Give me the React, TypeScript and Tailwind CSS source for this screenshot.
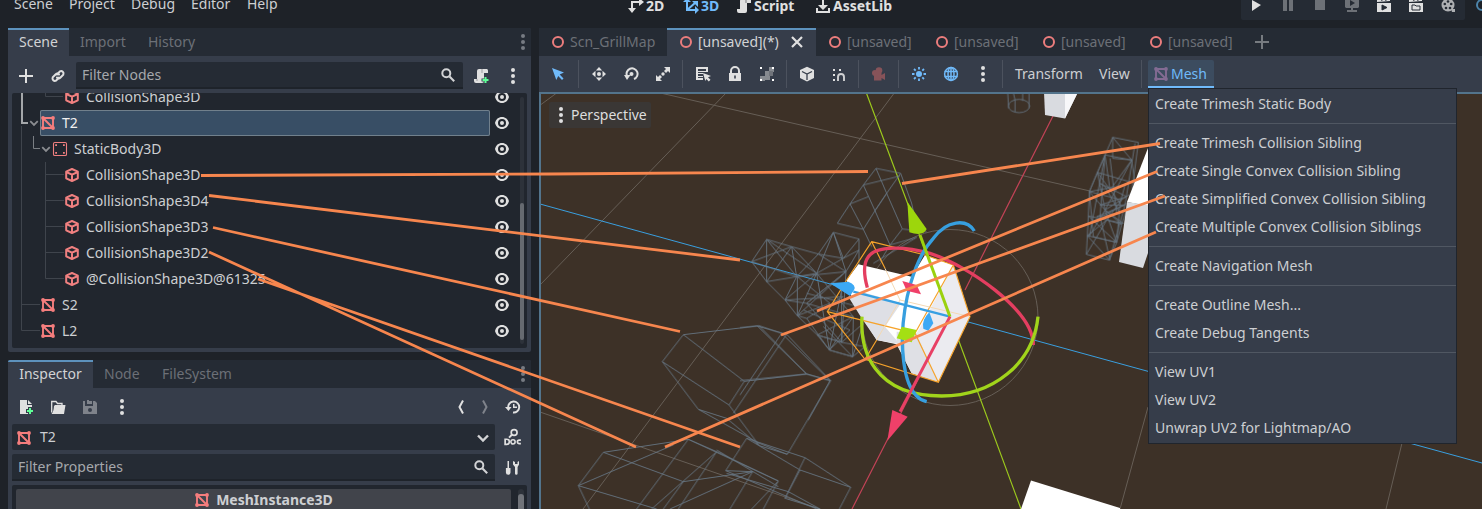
import React from "react";

type P = { c?: string; s?: number; children?: React.ReactNode; cls?: string };
const I = ({ c = "#e0e0e0", s = 16, children, cls = "" }: P) => (
  <svg width={s} height={s} viewBox="0 0 16 16" fill={c} className={"shrink-0 " + cls}>{children}</svg>
);

const MeshIcon = ({ c = "#f57d7d" }: { c?: string }) => (
  <I c={c}>
    <path d="M3 3H13V13H3ZM3 3L13 13" fill="none" stroke={c} strokeWidth="1.9" />
    <circle cx="3" cy="3" r="1.9" /><circle cx="13" cy="3" r="1.9" /><circle cx="3" cy="13" r="1.9" /><circle cx="13" cy="13" r="1.9" />
  </I>
);
const ShapeIcon = () => (
  <I><path d="M8 2L13.8 4.7V11.3L8 14L2.2 11.3V4.7ZM2.2 5L8 7.7L13.8 5M8 7.7V14" fill="none" stroke="#f08080" strokeWidth="2" strokeLinejoin="round" /></I>
);
const BodyIcon = () => (
  <I c="#f08080">
    <rect x="1.5" y="1.5" width="13" height="13" rx="1.3" fill="none" stroke="#f08080" strokeWidth="1.1" />
    <path d="M3.2 3.2h1.8v1.8H3.200zM11 3.200h1.800v1.800h-1.800zM3.200 11h1.800v1.800H3.200zM11 11h1.800v1.800h-1.800z" />
  </I>
);
const Eye = () => (
  <I>
    <path d="M8 2C4.4 2 1.9 4.3 1 8c1 3.8 3.6 6 7 6s6-2.200 7-6C14 4.200 11.500 2 8 2Zm0 2a4 4 0 1 1 0 8a4 4 0 0 1 0-8Zm0 2a2 2 0 1 0 0 4a2 2 0 0 0 0-4Z" />
  </I>
);
const Dots = ({ c = "#e0e0e0" }: { c?: string }) => (
  <I c={c}><circle cx="8" cy="2" r="2" /><circle cx="8" cy="8" r="2" /><circle cx="8" cy="14" r="2" /></I>
);
const Search = () => (
  <I c="none"><circle cx="6.300" cy="6.300" r="4" stroke="#d2d3d5" strokeWidth="2" /><path d="M9.500 9.500L14.200 14.200" stroke="#d2d3d5" strokeWidth="2.100" /></I>
);
const Chevron = ({ c = "#8b8d91", s = 12 }: { c?: string; s?: number }) => (
  <I c="none" s={s}><path d="M3 5.500L8 10.500L13 5.500" stroke={c} strokeWidth="2.400" /></I>
);
const Ring = () => <I c="none"><circle cx="8" cy="8" r="5" stroke="#ec7d7d" strokeWidth="2" /></I>;
const Plus = ({ c = "#e0e0e0" }: { c?: string }) => <I c={c}><path d="M7 1h2v6h6v2H9v6H7V9H1V7h6z" /></I>;
const ScriptAdd = () => (
  <I><path d="M6 1h8a2 2 0 0 1 1 2v2h-4v8a2 2 0 0 1-2 2H3a2 2 0 0 1-2-2v-2h3V3a2 2 0 0 1 2-2Z" /><path d="M9 1v4M4 11v2" stroke="#9b9da0" />
    <path d="M11 8h3v2.500h2.500v3H14V16h-3v-2.500H8.500v-3H11z" fill="#363d4a" /><path d="M11.500 9h2v2h2v2h-2v2h-2v-2h-2v-2h2z" fill="#5fff97" /></I>
);

type Row = { t: string; pad: string; k: "m" | "s" | "b"; arrow?: boolean; sel?: boolean };
const rows: Row[] = [
  { t: "CollisionShape3D", pad: "pl-[52px]", k: "s" },
  { t: "T2", pad: "pl-4", k: "m", arrow: true, sel: true },
  { t: "StaticBody3D", pad: "pl-7", k: "b", arrow: true },
  { t: "CollisionShape3D", pad: "pl-[52px]", k: "s" },
  { t: "CollisionShape3D4", pad: "pl-[52px]", k: "s" },
  { t: "CollisionShape3D3", pad: "pl-[52px]", k: "s" },
  { t: "CollisionShape3D2", pad: "pl-[52px]", k: "s" },
  { t: "@CollisionShape3D@61325", pad: "pl-[52px]", k: "s" },
  { t: "S2", pad: "pl-7", k: "m" },
  { t: "L2", pad: "pl-7", k: "m" },
];

const TreeRow = ({ r }: { r: Row }) => (
  <div className={"flex h-[26px] shrink-0 items-center " + r.pad}>
    {r.arrow && <span className="flex w-3 shrink-0"><Chevron /></span>}
    <div className={"flex h-[26px] flex-1 items-center gap-1.5 " + (r.sel ? "rounded-xs bg-[#384e65] text-[#f0f0f0] shadow-[inset_0_0_0_1px_#71808c]" : "")}>
      {r.k === "m" ? <MeshIcon /> : r.k === "s" ? <ShapeIcon /> : <BodyIcon />}
      <span>{r.t}</span>
    </div>
    <div className="ml-1 mr-[17px] flex w-4"><Eye /></div>
  </div>
);

const TreeLines = () => (
  <svg className="absolute left-0 top-0" width="60" height="255" fill="none">
    <path d="M9.500 33V237.500H28M9.500 211.500H28M33.500 0V3.500H51M33.500 69V185.500H52M33.500 81.500H52M33.500 107.500H52M33.500 133.500H52M33.500 159.500H52" stroke="#3f444c" />
    <path d="M10 0V30H16" stroke="#a4a7aa" strokeWidth="2" />
    <path d="M21.500 43V55.500H28" stroke="#7a7e83" />
  </svg>
);

const SceneDock = () => (
  <section className="flex h-[324px] flex-col rounded-xs bg-[#363d4a]">
    <div className="flex h-7 items-center rounded-t-xs bg-[#252b34] text-[#6c7077]">
      <div className="flex h-7 w-[61px] items-center justify-center border-t-2 border-[#5d92bd] bg-[#363d4a] pb-0.5 text-[#d2d3d5]">Scene</div>
      <span className="ml-[11px] w-[68px]">Import</span>
      <span className="flex-1">History</span>
      <Dots c="#777b82" />
    </div>
    <div className="flex h-[37px] items-center pl-2.5 pr-2.5 pt-0.5">
      <Plus />
      <I cls="ml-4"><g fill="none" stroke="#e0e0e0" strokeWidth="2" strokeLinecap="round"><path d="M7 6.500L10 3.300A2.500 2.500 0 0 1 13.300 6.600L10.500 9.500A2.500 2.500 0 0 1 7 9.500" /><path d="M9 9.500L6 12.700A2.500 2.500 0 0 1 2.700 9.400L5.500 6.500A2.500 2.500 0 0 1 9 6.500" /></g></I>
      <div className="ml-2.5 flex h-[27px] w-[387px] items-center justify-between rounded-t-xs border-b-2 border-[#1e232a] bg-[#252b34] pl-1.5 pr-[7px] text-[#a5a8ac]">
        Filter Nodes<Search />
      </div>
      <span className="ml-[10px] flex"><ScriptAdd /></span>
      <span className="ml-4 flex"><Dots /></span>
    </div>
    <div className="relative mx-1 flex h-[255px] flex-col overflow-hidden rounded-xs bg-[#21262e]">
      <TreeLines />
      <div className="-mt-[9px] flex flex-col">{rows.map((r, i) => <TreeRow key={i} r={r} />)}</div>
      <div className="absolute right-[3px] top-1 h-[247px] w-1 rounded bg-[#2d323a] pt-[106px]"><div className="h-[137px] w-1 rounded-full bg-[#666a70]" /></div>
    </div>
  </section>
);

const Inspector = () => (
  <section className="mt-2 flex h-[149px] flex-col overflow-hidden rounded-t-xs bg-[#363d4a]">
    <div className="flex h-7 shrink-0 items-center bg-[#252b34] text-[#6c7077]">
      <div className="flex h-7 w-[85px] items-center justify-center border-t-2 border-[#5d92bd] bg-[#363d4a] pb-0.5 text-[#d2d3d5]">Inspector</div>
      <span className="ml-[11px] w-[58px]">Node</span>
      <span className="flex-1">FileSystem</span>
      <Dots c="#777b82" />
    </div>
    <div className="flex h-9 shrink-0 items-center gap-4 pl-2.5 pr-2.5 pt-0.5">
      <I><path d="M2 1h7v5h5v9H2zM10 1l4 4h-4z" /><path d="M10 8h4v2h2v4h-2v2h-4v-2H8v-4h2z" fill="#363d4a" /><path d="M11 9h2v2h2v2h-2v2h-2v-2H9v-2h2z" fill="#5fff97" /></I>
      <I><path d="M1.700 13.500V2.500H6L7.500 4.500H12V6" fill="none" stroke="#e0e0e0" strokeWidth="1.300" /><path d="M5 6h10.500L14 15H1.500Q3.600 13 4 7Z" /></I>
      <I c="#7f838b"><path d="M1 2h2v5h8V2h2l2 2v11H1zM5 1h2v4H5zM7 2h3v3H7z" /><circle cx="8" cy="11" r="2" fill="#363d4a" /></I>
      <Dots />
      <span className="flex-1" />
      <I c="none" cls="-mr-2"><path d="M10 1.500L6.500 8L10 14.500" stroke="#e0e0e0" strokeWidth="2" /></I>
      <I c="none" cls="-mr-1"><path d="M6 1.500L9.500 8L6 14.500" stroke="#7f838b" strokeWidth="2" /></I>
      <I><path d="M3.300 9A5.500 5.500 0 1 1 8 13.500" fill="none" stroke="#e0e0e0" strokeWidth="1.900" /><path d="M0 8h6.500L3.500 12zM8 5h1.500v2.500H12V9H8z" /></I>
    </div>
    <div className="flex h-[26px] shrink-0 items-center pl-1">
      <div className="flex h-[26px] w-[483px] items-center gap-2 rounded-xs bg-[#252b34] pl-1 pr-1"><span className="flex pt-0.5"><MeshIcon /></span><span className="flex-1">T2</span><span className="flex pt-0.5"><Chevron c="#d2d3d5" s={16} /></span></div>
      <I s={18} cls="ml-[9px]"><circle cx="9" cy="4" r="2.600" fill="none" stroke="#e0e0e0" strokeWidth="1.500" /><path d="M7 6L4.500 8.500" stroke="#e0e0e0" strokeWidth="1.700" /><path d="M1 10v4.500h1.500a2 2 0 0 0 0-4.500zM15 10.700h-1.500a1.300 1.300 0 0 0 0 3.200H15" fill="none" stroke="#e0e0e0" strokeWidth="1.500" /><circle cx="8" cy="12.300" r="1.900" fill="none" stroke="#e0e0e0" strokeWidth="1.400" /></I>
    </div>
    <div className="mt-1 flex h-[27px] shrink-0 items-center pl-1">
      <div className="flex h-[27px] w-[483px] items-center justify-between rounded-t-xs border-b-2 border-[#1e232a] bg-[#252b34] pl-1.5 pr-1.5 text-[#a5a8ac]">Filter Properties<Search /></div>
      <I cls="ml-[9px]"><path d="M3.500 1h1.500v7h1.500v4.500a2.300 2.300 0 0 1-4.600 0V8h1.600zM9 1v3.500L11 7v6.500a1.300 1.300 0 0 0 2.600 0V7L15 4.500V1l-1.500 1v2h-2.500V2z" /></I>
    </div>
    <div className="mx-1 mt-1 flex h-[60px] shrink-0 gap-[7px] rounded-xs bg-[#21262e] pl-1 pt-1">
      <div className="flex h-[22px] w-[495px] items-center justify-center gap-1.5 rounded-t-xs bg-[#41444b] font-bold"><MeshIcon /><span>MeshInstance3D</span></div>
      <div className="h-10 w-1.5 rounded bg-[#2d323a] pt-[5px]"><div className="h-10 w-1.5 rounded-full bg-[#707379]" /></div>
    </div>
  </section>
);

const Sep = () => <div className="h-7 w-px shrink-0 bg-[#4c525e]" />;
const Tool = ({ children }: { children: React.ReactNode }) => <div className="flex h-7 w-8 shrink-0 items-center justify-center">{children}</div>;

const Toolbar = () => (
  <div className="flex h-9 shrink-0 items-center bg-[#363d4a]">
    <span className="ml-[3px] flex"><Tool><I c="#70bafa"><path d="M2 2L14 6.500L9.700 8.600L13.500 12.500L12 14L8.200 10L6.300 14Z" /></I></Tool></span>
    <span className="ml-1 flex"><Sep /></span>
    <span className="ml-1 flex">
      <Tool><I><circle cx="8" cy="8" r="2" /><path d="M8 1l3.200 3.500H4.800zM8 15l-3.200-3.500h6.400zM1 8l3.500-3.200v6.400zM15 8l-3.500 3.200V4.800z" /></I></Tool>
      <Tool><I><path d="M4 10A5.500 5.500 0 1 1 11 13" fill="none" stroke="#e0e0e0" strokeWidth="2" /><path d="M1 9h6.500L4 14z" /><circle cx="8.500" cy="8" r="2" /></I></Tool>
      <Tool><I><path d="M9 1h6v6l-2-2-2 2-2-2 2-2zM7 15H1V9l2 2 2-2 2 2-2 2z" /><circle cx="8" cy="8" r="1.700" /></I></Tool>
    </span>
    <span className="ml-[3px] flex"><Sep /></span>
    <span className="ml-1 flex">
      <Tool><I><path d="M1 1h12v5h-2V3H3v2h8v1H8v2H3v1h5v2H3v1h5v2H1z" /><path d="M3 3.500h8M3 6.500h6M3 9.500h5" stroke="#363d4a" /><path d="M8 7l8 3-3 1.300 2.500 2.500-1.700 1.700-2.500-2.500-1 2z" /></I></Tool>
      <Tool><I><path d="M4 7V5a4 4 0 0 1 8 0v2" fill="none" stroke="#e0e0e0" strokeWidth="2" /><path d="M2 7h12v8H2z" /><path d="M7.200 9.500h1.600v3H7.200z" fill="#363d4a" /></I></Tool>
      <Tool><I><path d="M6 5h5v5H6zM10 1h5v5h-5zM1 10h5v5H1zM6 10h5v4H6z" fill="#868a90" /><path d="M10 5h4v5h-4z" fill="#70747b" /><path d="M1 1h2v2H1zM13 1h2v2h-2zM1 13h2v2H1zM13 13h2v2h-2z" fill="#fff" /></I></Tool>
    </span>
    <span className="ml-[3px] flex"><Sep /></span>
    <span className="ml-1 flex">
      <Tool><I><path d="M8 .7L15 4v8l-7 3.500L1 12V4z" /><path d="M3 5.500L8 8l5-2.500M8 8v6" fill="none" stroke="#363d4a" strokeWidth="1.300" /></I></Tool>
      <Tool><I><path d="M7 15V11a3 3 0 0 1 6 0v4" fill="none" stroke="#d0d1d3" strokeWidth="1.900" /><path d="M2 3h2v2H2zM8 3h2v2H8zM2 8h2v2H2zM2 13h2v2H2z" /></I></Tool>
    </span>
    <span className="ml-[3px] flex"><Sep /></span>
    <span className="ml-[3px] flex"><Tool><I c="#875359"><circle cx="5" cy="7" r="3" /><circle cx="9" cy="4.500" r="3.300" /><path d="M4 7h7.500v2l3.500-2v7l-3.500-2v2.500H4z" /></I></Tool></span>
    <span className="ml-1 flex"><Sep /></span>
    <span className="ml-1 flex">
      <Tool><I c="#70bafa"><circle cx="8" cy="8" r="3" /><path d="M8 1v2.500M8 12.500V15M1 8h2.500M12.500 8H15M3 3l1.700 1.700M11.300 11.300L13 13M13 3l-1.700 1.700M3 13l1.700-1.700" stroke="#70bafa" strokeWidth="1.800" /></I></Tool>
      <Tool><I c="none"><g stroke="#70bafa" strokeWidth="1.500"><circle cx="8" cy="8" r="6.400" /><ellipse cx="8" cy="8" rx="3" ry="6.400" /><path d="M1.500 5.500H14.500M1.500 10.500H14.500M8 1V15" /></g></I></Tool>
      <Tool><Dots /></Tool>
    </span>
    <span className="ml-[3px] flex"><Sep /></span>
    <span className="ml-3 w-[84px]">Transform</span>
    <span className="w-[42px]">View</span>
    <Sep />
    <div className="ml-1.5 flex h-7 w-[66px] items-center gap-0.5 rounded-t-xs border-b-2 border-[#70bafa] bg-[#3c4c5f] pl-[5px] pt-0.5 text-[#70bafa]"><MeshIcon c="#836b93" /><span>Mesh</span></div>
  </div>
);

const SceneTabs = () => (
  <div className="flex h-7 shrink-0 items-center bg-[#252b34] text-[#6c7077]">
    <div className="flex h-7 w-32 items-center gap-1 pl-[11px]"><Ring /><span>Scn_GrillMap</span></div>
    <div className="flex h-7 w-[149px] items-center gap-1 border-t-2 border-[#5d92bd] bg-[#363d4a] pb-0.5 pl-[11px] text-[#d2d3d5]">
      <Ring /><span className="w-[87px]">[unsaved](*)</span>
      <I><path d="M3 3L13 13M13 3L3 13" stroke="#e0e0e0" strokeWidth="2.200" /></I>
    </div>
    {[0, 1, 2, 3].map((i) => <div key={i} className="flex h-7 w-[107px] items-center gap-1 pl-[11px]"><Ring /><span>[unsaved]</span></div>)}
    <span className="ml-[10px] flex"><Plus c="#777b80" /></span>
  </div>
);

const Drawing = () => (
  <svg className="absolute left-0 top-0" width="941" height="415" viewBox="541 94 941 415" fill="none">
    <g stroke="#665e56" strokeWidth="1">
      <path d="M539 106L558 92M656 92L1090 191M727 92L540 285M895 92L583 509M540 412L820 509M1148 407L1120 509M1402 443L1386 509" />
      <circle cx="950" cy="317.500" r="88" />
    </g>
    <g stroke="#3a9fdf"><path d="M540 204L950 317L1482 463" /></g>
    <path d="M866 92L950 317L1021 509" stroke="#9cc91d" strokeWidth="1.200" />
    <path d="M1054 114L965 290M950 317L852 509" stroke="#c24357" strokeWidth="1.200" />
    <g stroke="#6b7c8b" strokeWidth="1" opacity=".9">
      <g transform="translate(740 150) scale(.33333)" strokeWidth="2.800">
        <path d="M408 55L482 70L515 160L535 250M408 55L370 105L330 162L292 220L370 238L405 182L440 130L482 70M408 55L440 130L487 237L560 245M370 105L405 182L450 285L487 237M370 105L480 78M330 162L385 140M330 162L370 238L395 290M405 182L440 130M450 285L530 262L400 340M450 285L420 335" />
        <path d="M35 335L80 268L155 290L235 312L280 247L357 267V350M35 335L80 395L135 450L172 497L200 505M35 335L155 290L80 395L230 370L155 290L170 380L235 312L310 325L280 247L230 370L310 325L357 267M80 268L170 380L135 450L230 370L172 497L318 365L200 460L340 500L232 555L268 600L338 620L375 590L305 577L232 555L172 497M35 335L170 380L318 365L235 312M80 268L230 370L340 500M135 450L310 440L200 505L268 600L340 500L338 620L268 600L305 420V577L200 460M172 497V380L270 460L172 497M230 370L268 600M232 555L305 577L370 520L338 620L250 530M310 325L357 300L318 365L200 460L135 450M280 247L318 365L305 577M190 480L330 540L268 600M200 430L357 470M80 268L80 395" />
        <path d="M0 533L57 527L125 550L270 692L205 810M57 527L200 672L0 692M125 550L0 735M200 672L270 692" />
      </g>
      <g transform="translate(550 300) scale(.33333)" strokeWidth="2.800">
        <path d="M400 104L622 78L710 103L842 242L712 463L628 437L537 315L337 185L400 104L583 244L770 222L622 78M583 244L537 315M710 103L550 340M337 185L445 328L530 355L628 437M770 222L842 242M445 328L628 430L712 463" />
        <path d="M160 457L370 425L415 418L500 455L685 543L605 627M160 457L85 557L118 627M160 457L400 545L608 515L527 512L590 415L765 473L902 562L868 627M590 415L750 510L902 562M85 557L320 627M85 557L370 435M415 418L260 627M500 455L305 627M500 455L385 627M400 545L340 627M608 515L540 627M608 515L360 627M685 543L640 627M527 512L800 627M765 473L705 595L810 627M750 510L705 595M415 418L685 543M530 520L715 575L810 627M500 450L685 560" />
      </g>
      <g transform="translate(990 90) scale(.33333)" strokeWidth="2.800">
        <path d="M368 142L445 157L425 310L395 403L380 457L358 510L289 493L292 437L295 378L298 305L322 247L345 195L368 142V205L425 210L345 195L360 300L425 210L435 280L322 247L390 340L405 285L298 305L345 360L400 400L295 378L380 457L292 437L358 510M368 142L425 210L345 360L322 247M345 195L298 305L310 440L380 457L345 360L395 403L350 390L289 493M435 160L405 345L358 510M425 310L345 360L298 438L345 195M390 340L380 457M298 305L395 330L350 390L292 437M298 400L410 340M330 280L410 320L330 345L405 345L320 380L390 370L345 290ZM360 205L380 370M345 195L330 380L360 510" />
        <path d="M53 8L56 55M70 8L75 30M98 8V33M117 8V55M75 30V65" /><ellipse cx="87" cy="48" rx="32" ry="20" />
      </g>
    </g>
    <path d="M1044 92H1078L1065 118.500L1045 115Z" fill="#d9dbe0" /><path d="M1065 92H1078L1065 118.500Z" fill="#f7f7f9" />
    <path d="M1148 148V206L1127 202Z" fill="#fff" /><path d="M1127 202L1148 205V253L1143 268L1119 262Z" fill="#d9dbe0" />
    <path d="M1031 480.500L1120 508V509H1021Z" fill="#fff" />
    <g transform="translate(740 150) scale(.33333)">
      <path d="M355 343L515 380L555 315L640 345L690 500L595 697L515 670L470 583L410 570L340 460L320 390Z" fill="#fff" />
      <path d="M325 440L375 428L483 460L435 530L480 583L410 570L365 505Z" fill="#dedfe5" />
      <path d="M640 345L690 500L595 697L530 550L545 525Z" fill="#ebebf0" />
      <path d="M470 545L530 550L595 697L515 670L470 583Z" fill="#dfe0e5" />
      <path d="M395 275L555 315L640 345L690 500L595 697L375 628L262 485L320 390ZM262 485L525 550L595 697M640 345L525 550M395 275L435 355M410 570L375 628" stroke="#f6a32b" strokeWidth="3.500" />
      <path d="M435 355L480 450L690 500M480 450L410 570" stroke="#f4d9b4" strokeWidth="3" />
      <path d="M382 413C370 370 370 340 385 320C410 285 500 290 570 310C680 345 880 480 880 585" stroke="#e43e60" strokeWidth="10" />
      <path d="M366 500C360 600 400 738 605 738C760 738 880 640 894 500" stroke="#a1d41b" strokeWidth="10" />
      <path d="M703 243C680 205 620 210 580 265C520 330 490 460 487 560C487 650 500 740 560 755" stroke="#379fdf" strokeWidth="10" />
      <path d="M630 500L340 425" stroke="#379fe2" strokeWidth="7" />
      <path d="M630 500L540 255" stroke="#9bd10e" strokeWidth="9" />
      <path d="M630 500L480 785" stroke="#e84065" strokeWidth="9" />
      <path d="M502 155L560 237Q550 260 508 247Z" fill="#9dd60c" />
      <path d="M270 400L325 395Q350 405 342 420L330 438Z" fill="#3ca9f5" />
      <path d="M457 780L503 800L442 872Z" fill="#f04069" />
      <path d="M487 393L530 405L543 433L500 422Z" fill="#f04069" />
      <path d="M485 530L530 540L515 577L470 565Z" fill="#a4df13" />
      <path d="M568 487L580 520L565 542L550 536Q544 510 568 487Z" fill="#3ca9f5" />
    </g>
  </svg>
);

const Menu = () => (
  <div className="absolute left-[609px] top-[60px] flex h-[356px] w-[309px] flex-col border border-[#20252d] bg-[#363d4a] pt-px text-[#cdcfd2]">
    {["Create Trimesh Static Body", "", "Create Trimesh Collision Sibling", "Create Single Convex Collision Sibling", "Create Simplified Convex Collision Sibling", "Create Multiple Convex Collision Siblings", "", "Create Navigation Mesh", "", "Create Outline Mesh...", "Create Debug Tangents", "", "View UV1", "View UV2", "Unwrap UV2 for Lightmap/AO"].map((t, i) =>
      t ? <div key={i} className="flex h-7 shrink-0 items-center pl-1.5">{t}</div> : <div key={i} className="flex h-[11px] shrink-0 items-center"><div className="h-px w-full bg-[#505762]" /></div>
    )}
  </div>
);

const Header = () => (
  <header className="flex h-7 shrink-0">
    <nav className="-mt-[10px] flex h-7 w-[628px] shrink-0 items-center pl-3.5">
      <span className="w-[55px]">Scene</span><span className="w-[62px]">Project</span><span className="w-[60px]">Debug</span><span className="w-[56px]">Editor</span><span>Help</span>
    </nav>
    <nav className="-mt-2 flex h-7 w-[613px] shrink-0 items-center font-bold text-[#e0e0e0]">
      <span className="flex w-[55px] items-center gap-0.5"><I><path d="M4 13V4H13" fill="none" stroke="#e0e0e0" strokeWidth="2" /><path d="M11 0l5 4-5 4zM0 10h8l-4 5z" /></I>2D</span>
      <span className="flex w-[53px] items-center gap-0.5 text-[#70bafa]"><I><path d="M4 3V12H13M4 12L12 5" fill="none" stroke="#70bafa" strokeWidth="2" /><path d="M0 4h8L4 0zM12 8v8l4-4zM9 3h6v6z" fill="#70bafa" /></I>3D</span>
      <span className="flex w-[79px] items-center gap-0.5"><I><path d="M6 1h8a2 2 0 0 1 1 2v2h-4v8a2 2 0 0 1-2 2H3a2 2 0 0 1-2-2v-2h3V3a2 2 0 0 1 2-2Z" /><path d="M10 1v4" stroke="#77797c" /></I>Script</span>
      <span className="flex items-center gap-0.5"><I><path d="M7 1h2v6h4l-5 5-5-5h4zM1 10h2v3h10v-3h2v5H1z" /></I>AssetLib</span>
    </nav>
    <div className="-mt-2 flex h-7 w-[224px] shrink-0 items-center gap-4 rounded-b-xs bg-[#252b34] pb-[7px] pl-[7px] pt-[5px]">
      <I><path d="M4 3L13 8L4 14Z" /></I>
      <I c="#6d7177"><path d="M3 2h4v12H3zM9 2h4v12H9z" /></I>
      <I c="#6d7177"><path d="M3 3h10v10H3z" /></I>
      <I c="#6d7177"><path d="M2 1h12l1 1v8l-1 1H9v2h4v2H3v-2h4v-2H2l-1-1V2z" /><path d="M6 3l5 3-5 3z" fill="#252b34" /></I>
      <I><path d="M1 6h14v9H1zM1 2l13-2v4L1 5z" /><path d="M5 1l1 3M9 0l1 4M6 8l5 2.500L6 13z" fill="#252b34" stroke="#252b34" /></I>
      <I><path d="M1 6h14v9H1zM1 2l13-2v4L1 5z" /><path d="M5 1l1 3M9 0l1 4" stroke="#252b34" /><path d="M4 8h3l1 1h4v4H4z" fill="none" stroke="#252b34" /></I>
      <I c="#aeb0b3"><circle cx="8" cy="8" r="6.500" /><path d="M11 12h4v3h-3z" /><g fill="#252b34"><circle cx="8" cy="4.500" r="1.300" /><circle cx="4.800" cy="7" r="1.300" /><circle cx="11.200" cy="7" r="1.300" /><circle cx="6" cy="11" r="1.300" /><circle cx="10" cy="11" r="1.300" /></g></I>
    </div>
    <I c="none" cls="ml-[9px] -mt-[3px]"><circle cx="8" cy="8" r="5" stroke="#4c84aa" strokeWidth="2" /></I>
  </header>
);

export default function App() {
  return (
    <div className="relative flex h-[509px] w-[1482px] flex-col overflow-hidden whitespace-nowrap bg-[#1e2228] font-['Noto_Sans',sans-serif] text-[14px] leading-5 text-[#cdcfd2]">
      <Header />
      <main className="flex h-[481px] pl-2">
        <aside className="mr-2 flex w-[523px] shrink-0 flex-col"><SceneDock /><Inspector /></aside>
        <section className="relative flex w-[943px] shrink-0 flex-col">
          <SceneTabs />
          <Toolbar />
          <div className="relative h-[417px] overflow-hidden border-l-2 border-t-2 border-[#53748c] bg-[#3d3127] pl-2 pt-2">
            <Drawing />
            <div className="relative flex h-[26px] w-[102px] items-center gap-0.5 rounded-xs bg-[#3a3735] pl-1 text-[#dedede]"><Dots /><span>Perspective</span></div>
          </div>
          <Menu />
        </section>
      </main>
      <svg className="pointer-events-none absolute left-0 top-0" width="1482" height="509" fill="none" stroke="#f7864e" strokeWidth="2.800">
        <path d="M201 175.500L550 174L868 171.500M209 195.500L740 260M213 227.500L680 331.500M209 252L636 447M258 279L740 447M902 183.500L1160 143.500M817 311L1157 171.500M781 335L1165 196M665 447L1156 232" />
      </svg>
    </div>
  );
}
